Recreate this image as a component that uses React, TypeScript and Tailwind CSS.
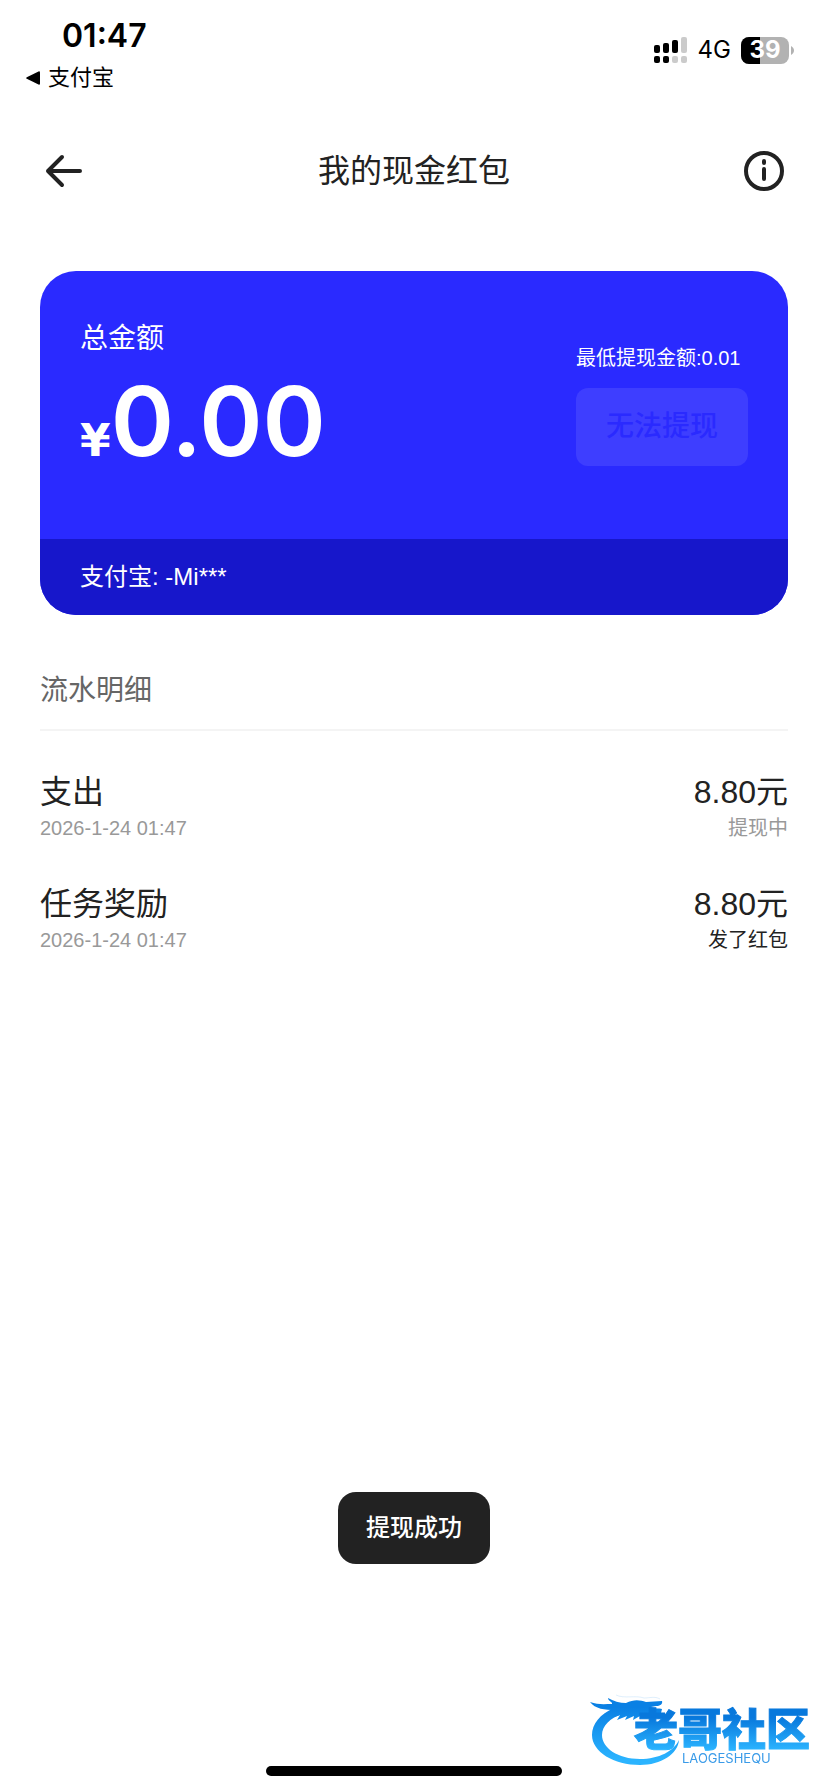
interface Transaction {
  title: string;
  time: string;
  amount: string;
  status: string;
  pending: boolean;
}

const transactions: Transaction[] = [
  { title: "支出", time: "2026-1-24 01:47", amount: "8.80元", status: "提现中", pending: true },
  { title: "任务奖励", time: "2026-1-24 01:47", amount: "8.80元", status: "发了红包", pending: false },
];

function SignalIcon() {
  return (
    <svg width="34" height="27" viewBox="0 0 34 27" aria-hidden="true">
      <g fill="#000">
        <rect x="0" y="8" width="6" height="8" rx="2" />
        <rect x="9" y="6" width="6" height="10" rx="2" />
        <rect x="18" y="3" width="6" height="13" rx="2" />
        <rect x="0" y="19" width="6" height="7" rx="2" />
        <rect x="9" y="19" width="6" height="7" rx="2" />
      </g>
      <g fill="#cbcbcb">
        <rect x="27" y="0" width="6" height="16" rx="2" />
        <rect x="18" y="19" width="6" height="7" rx="2" />
        <rect x="27" y="19" width="6" height="7" rx="2" />
      </g>
    </svg>
  );
}

function Battery({ level }: { level: number }) {
  return (
    <div className="flex items-center gap-0.5">
      <div className="relative h-[27px] w-12 overflow-hidden rounded-lg bg-[#b2b2b2]">
        <div className="h-full bg-black" style={{ width: `${level}%` }} />
        <span className="absolute inset-0 flex items-center justify-center text-2xl leading-none font-bold text-white">
          {level}
        </span>
      </div>
      <svg width="3" height="9" viewBox="0 0 3 9" aria-hidden="true">
        <path d="M0 0C2 1 3 3 3 4.500S2 8 0 9Z" fill="#b2b2b2" />
      </svg>
    </div>
  );
}

function StatusBar() {
  return (
    <header className="flex items-start justify-between pr-[34px] pl-[26px] text-black">
      <div className="pt-4">
        <div className="pl-9 font-[Inter,sans-serif] text-[32px] leading-10 font-semibold">01:47</div>
        <a href="#" className="flex items-center gap-2 text-[22px] leading-11">
          <svg width="14" height="14" viewBox="0 0 14 14" aria-hidden="true">
            <path d="M.8 6.200 12.500.4Q14 0 14 1.500v11q0 1.500-1.500 1.100L.8 7.800Q-.5 7 .8 6.200Z" />
          </svg>
          支付宝
        </a>
      </div>
      <div className="flex items-center gap-2.5 pt-9 font-[Inter,sans-serif]">
        <SignalIcon />
        <span className="text-2xl leading-7">4G</span>
        <Battery level={39} />
      </div>
    </header>
  );
}

function NavBar() {
  return (
    <nav className="mt-[47px] flex items-center justify-between px-10">
      <button type="button" aria-label="返回" className="p-1">
        <svg width="40" height="40" viewBox="0 0 40 40" fill="none" stroke="#222" strokeWidth="4" strokeLinecap="round" strokeLinejoin="round" aria-hidden="true">
          <path d="M36 20H4M18 6 4 20l14 14" />
        </svg>
      </button>
      <h1 className="text-[32px] leading-10">我的现金红包</h1>
      <button type="button" aria-label="说明" className="p-1">
        <svg width="40" height="40" viewBox="0 0 40 40" fill="none" stroke="#222" strokeWidth="4" strokeLinecap="round" aria-hidden="true">
          <circle cx="20" cy="20" r="18" />
          <path d="M20 18v10M20 10v2" />
        </svg>
      </button>
    </nav>
  );
}

function BalanceCard() {
  return (
    <section className="mx-10 mt-[76px] overflow-hidden rounded-[36px] bg-[#2a2aff] text-white">
      <div className="flex h-[268px] items-start justify-between px-10">
        <div className="pt-12">
          <h2 className="text-[28px] leading-10">总金额</h2>
          <p className="flex items-baseline">
            <span className="font-['DejaVu_Sans',sans-serif] text-[44px] leading-none font-bold">¥</span>
            <span className="font-[Inter,sans-serif] text-[96px] leading-[124px] font-semibold">0.00</span>
          </p>
        </div>
        <div className="pt-[73px]">
          <p className="text-xl leading-7">最低提现金额:0.01</p>
          <button type="button" disabled className="mt-4 h-[78px] w-[172px] rounded-xl bg-[#3e3eff] text-[28px] font-medium text-[#2a2aff]">
            无法提现
          </button>
        </div>
      </div>
      <div className="bg-[#1717cb] px-10 py-[18px] text-2xl leading-10">支付宝: -Mi***</div>
    </section>
  );
}

function TransactionList() {
  return (
    <section className="mx-10 mt-14">
      <h2 className="border-b-2 border-[#f4f4f4] pb-[18px] text-[28px] leading-10 text-[#666]">流水明细</h2>
      <ul className="mt-[39px] flex flex-col gap-10">
        {transactions.map(item => (
          <li key={item.title} className="flex justify-between">
            <div>
              <p className="text-[32px] leading-11">{item.title}</p>
              <p className="text-xl leading-7 text-[#999]">{item.time}</p>
            </div>
            <div className="text-right">
              <p className="text-[32px] leading-11">{item.amount}</p>
              <p className={item.pending ? "text-xl leading-7 text-[#999]" : "text-xl leading-7"}>{item.status}</p>
            </div>
          </li>
        ))}
      </ul>
    </section>
  );
}

function CommunityLogo() {
  return (
    <svg width="232" height="76" viewBox="0 0 232 76" className="fixed right-2 bottom-6" role="img" aria-label="老哥社区">
      <defs>
        <linearGradient id="swirl" x1="0" y1="0" x2="0" y2="76" gradientUnits="userSpaceOnUse">
          <stop offset="0.2" stopColor="#0a80e4" />
          <stop offset="0.9" stopColor="#2bb4ff" />
        </linearGradient>
        <linearGradient id="word" x1="0" y1="22" x2="0" y2="58" gradientUnits="userSpaceOnUse">
          <stop offset="0.1" stopColor="#0878dc" />
          <stop offset="1" stopColor="#2bb4ff" />
        </linearGradient>
      </defs>
      <g fill="url(#swirl)">
        <path d="M26 16C12 22 4 32 4 43c0 17 22 30 48 30 21 0 38-11 39-25-5 11-20 19-39 19-22 0-38-11-38-24 0-9 8-17 20-21l6-6Z" />
        <path d="M2 10c8 3 15 2 22 2 1-2-4-3-4-6 5 3 12 5 18 5 8-4 14-3 20-1l16-1c1 3-2 5-6 5l-5 1c4 2 8 1 11 2l-1 4-13 0c2 1 5 2 7 4-5 1-10 0-15-1l-7 4 1-4-9 4 2-4-10 4 3-5c-4 2-7 2-10 1 5-2 5-5 5-6-10 0-20-1-25-8Z" />
      </g>
      <path d="M28 3c8 4 20 0 28 3 6 0 11-2 16 1" fill="none" stroke="#2a96ec" strokeOpacity="0.15" />
      <text x="46" y="54" fill="url(#word)" stroke="url(#word)" strokeWidth="1" fontSize="44" fontWeight="900" fontFamily="'Noto Sans CJK SC', sans-serif">
        老哥社区
      </text>
      <text x="94" y="71" fill="#3a9be8" fontSize="13" fontFamily="Inter, sans-serif">
        LAOGESHEQU
      </text>
    </svg>
  );
}

export default function App() {
  return (
    <main className="min-h-screen bg-white font-['Liberation_Sans','Noto_Sans_CJK_SC',sans-serif] text-[#222]">
      <StatusBar />
      <NavBar />
      <BalanceCard />
      <TransactionList />
      <div role="status" className="fixed bottom-[228px] left-1/2 -translate-x-1/2 rounded-[18px] bg-[#222] px-7 py-4 text-2xl leading-10 font-medium text-white">
        提现成功
      </div>
      <CommunityLogo />
      <div className="fixed bottom-4 left-1/2 h-2.5 w-[296px] -translate-x-1/2 rounded-full bg-black" />
    </main>
  );
}
